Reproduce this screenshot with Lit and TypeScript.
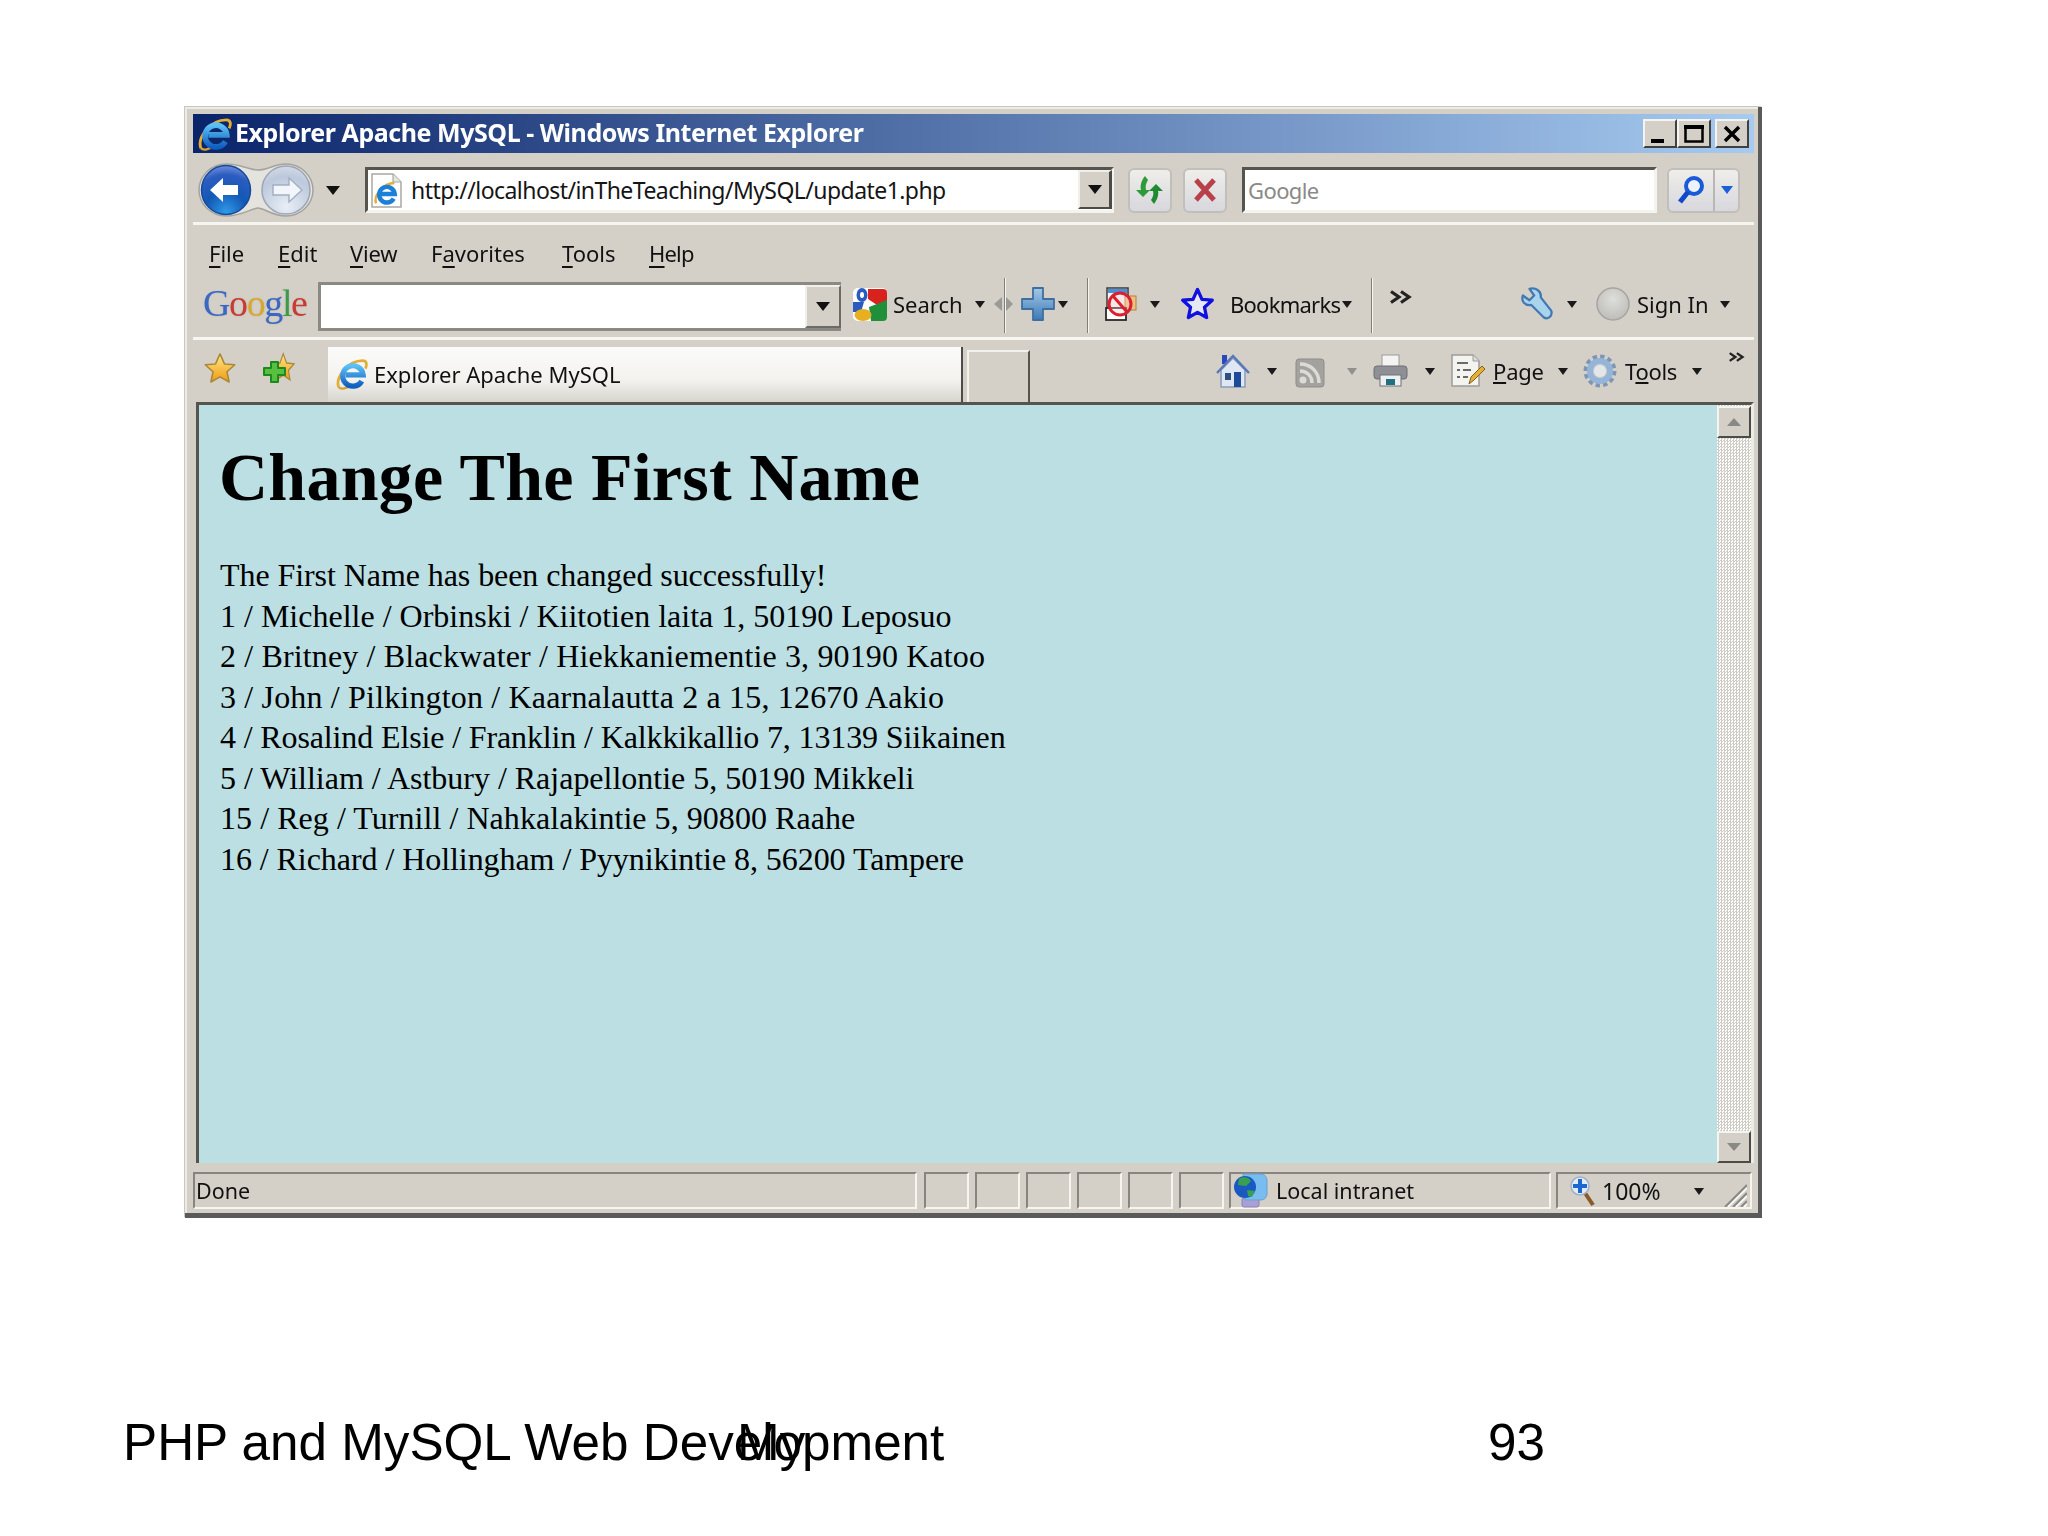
import { LitElement, html, css } from "lit";
import { customElement } from "lit/decorators.js";

const STAR = "17,2 21.6,12.3 32.2,13.1 24.2,20.4 26.4,30.9 17,25.6 7.6,30.9 9.8,20.4 1.8,13.1 12.4,12.3";

const ie = (size: number, id: string) => html`<svg width=${size} height=${size} viewBox="0 0 36 36" class="icon">
  <defs><linearGradient id=${id} x1="0" y1="0" x2="0" y2="1"><stop offset="0" stop-color="#5cc0f4"/><stop offset="1" stop-color="#0f5fc0"/></linearGradient></defs>
  <path d="M3 33C-1 22 13 3 30 3c5 0 5 5 3 9" fill="none" stroke="#e2ae34" stroke-width="3"/>
  <path d="M3 33c3 3 9 1 13-2" fill="none" stroke="#d8a030" stroke-width="2.5"/>
  <path d="M29 26A11.5 11.5 0 1 1 30.5 19H11" fill="none" stroke="url(#${id})" stroke-width="6"/>
</svg>`;

const arrow = (cls = "") => html`<svg class="arrow ${cls}" width="10" height="7" viewBox="0 0 10 7"><path d="M0 0h10L5 7z" fill="#1a1a1a"/></svg>`;
const garrow = html`<svg class="arrow ml22" width="10" height="7" viewBox="0 0 10 7"><path d="M0 0h10L5 7z" fill="#8f8f8c"/></svg>`;
const sep = (cls: string) => html`<i class="vsep ${cls}"></i>`;
const chev = (cls: string, w: number, h: number) => html`<svg class=${cls} width=${w} height=${h} viewBox="0 0 23 14"><path d="M2 1.5l8 5.5-8 5.5M12 1.5l8 5.5-8 5.5" fill="none" stroke="#222" stroke-width="3.2"/></svg>`;

@customElement("app-root")
export class AppRoot extends LitElement {
  static styles = css`
    :host { display: block; width: 2048px; height: 1536px; background: #fff; overflow: hidden; position: relative; font-family: "Noto Sans", sans-serif; }
    .slide { padding: 107px 0 0 185px; }
    svg { display: block; flex: none; }
    .win {
      box-sizing: border-box; width: 1577px; height: 1111px; background: #d4d0c8; padding: 7px 4px 5px 8px;
      border-right: 4px solid #5a5a5a; border-bottom: 5px solid #5a5a5a; box-shadow: inset 2px 2px 0 #ecebe4, -1px -1px 0 #c8c8c0;
      display: flex; flex-direction: column; filter: blur(0.55px); color: #111;
    }
    .title { height: 39px; flex: none; background: linear-gradient(90deg, #0a246a 0%, #a6caf0 100%); display: flex; align-items: center; color: #fff; position: relative; }
    .title .icon { margin-left: 5px; }
    .title b { margin: -3px 0 0 3px; font-size: 25px; font-weight: 700; white-space: nowrap; letter-spacing: -0.45px; }
    .wbtns { margin-left: auto; margin-right: 5px; display: flex; }
    .wb { width: 34px; height: 29px; box-sizing: border-box; background: #d4d0c8; border: 2px solid; border-color: #f4f4f0 #404040 #404040 #f4f4f0; display: flex; align-items: center; justify-content: center; }
    .wb.close { margin-left: 4px; }
    .row { display: flex; flex: none; box-sizing: border-box; }
    .addr { height: 72px; padding-top: 5px; align-items: center; border-bottom: 3px solid; border-image: linear-gradient(#7f7e78 50%, #f6f5f0 50%) 1; }
    .menu { height: 51px; align-items: center; padding: 4px 0 0 16px; font-size: 22px; }
    .menu span { white-space: nowrap; flex: none; }
    .menu u { text-decoration-thickness: 2px; text-underline-offset: 4px; }
    .m-file { width: 34px; } .m-edit { width: 37px; margin-left: 35px; } .m-view { width: 47px; margin-left: 35px; letter-spacing: -0.2px; } .m-fav { width: 96px; margin-left: 34px; } .m-tools { width: 53px; margin-left: 35px; } .m-help { width: 44px; margin-left: 34px; letter-spacing: -0.8px; }
    .gbar { height: 64px; align-items: flex-start; padding-top: 11px; border-bottom: 3px solid; border-image: linear-gradient(#85847e 50%, #f6f5f0 50%) 1; }
    .tabs { height: 62px; align-items: flex-start; padding-top: 14px; }
    .tool { font-size: 22px; white-space: nowrap; line-height: 34px; flex: none; }
    .l-search { width: 70px; } .l-book { width: 108px; letter-spacing: -0.75px; } .l-sign { width: 71px; } .l-page { width: 50px; letter-spacing: -0.2px; } .l-tools { width: 53px; letter-spacing: -0.3px; }
    .arrow { align-self: flex-start; margin-top: 14px; }
    .gripm { margin-top: 10px; }
    .vsep { flex: none; width: 2px; height: 55px; margin-top: -9px; background: linear-gradient(90deg, #7f7e78 50%, #f6f5f0 50%); }
    .chev1 { margin-top: 3px; }
    .chev2 { margin-top: -2px; }
    .up2 { margin-top: -2px; }
    .rss { margin-top: 4px; }
    .ml0 { margin-left: 0; } .ml2 { margin-left: 2px; } .ml3 { margin-left: 3px; } .ml4 { margin-left: 4px; } .ml5 { margin-left: 5px; } .ml7 { margin-left: 7px; }
    .ml8 { margin-left: 8px; } .ml9 { margin-left: 9px; } .ml10 { margin-left: 10px; } .ml11 { margin-left: 11px; } .ml12 { margin-left: 12px; } .ml13 { margin-left: 13px; }
    .ml14 { margin-left: 14px; } .ml15 { margin-left: 15px; } .ml16 { margin-left: 16px; } .ml17 { margin-left: 17px; } .ml18 { margin-left: 18px; } .ml19 { margin-left: 19px; }
    .ml21 { margin-left: 21px; } .ml22 { margin-left: 22px; } .ml25 { margin-left: 25px; } .ml26 { margin-left: 26px; } .ml33 { margin-left: 33px; } .ml108 { margin-left: 108px; } .ml186 { margin-left: 186px; }
    .sunken { box-sizing: border-box; background: #fff; border: 3px solid; border-color: #55544f #f4f4ef #f4f4ef #55544f; display: flex; align-items: center; flex: none; }
    .address { width: 749px; height: 46px; font-size: 23px; }
    .address .url { margin-left: 9px; white-space: nowrap; letter-spacing: -0.56px; flex: 1; color: #151515; }
    .address .icon { margin-left: 3px; }
    .combo { box-sizing: border-box; flex: none; align-self: stretch; width: 34px; background: #d4d0c8; border: 2px solid; border-color: #f0efea #4c4b46 #4c4b46 #f0efea; display: flex; align-items: center; justify-content: center; }
    .address .combo { margin-bottom: 1px; margin-right: -1px; border-right-width: 3px; }
    .searchbox { width: 415px; height: 46px; font-size: 22px; letter-spacing: -0.6px; color: #8a8a88; padding-left: 3px; border-right-color: #f4f4ef; }
    .btn { box-sizing: border-box; flex: none; height: 45px; border: 2px solid #c0bfbc; border-radius: 6px; background: linear-gradient(#efeeea, #d7d7dd); display: flex; align-items: center; justify-content: center; }
    .btn.w44 { width: 44px; }
    .btn.sb { width: 73px; padding: 0; justify-content: flex-start; }
    .sb .a { width: 44px; height: 100%; display: flex; align-items: center; justify-content: center; border-right: 2px solid #b8b7b4; }
    .sb .b { flex: 1; display: flex; align-items: center; justify-content: center; }
    .glogo { width: 104px; font-family: "Liberation Serif", serif; font-size: 38px; line-height: 32px; letter-spacing: -1.4px; white-space: nowrap; flex: none; text-shadow: 0 0 2px rgba(0,0,0,.12); }
    .glogo .b { color: #3a68c4; } .glogo .r { color: #c83a32; } .glogo .y { color: #d8a82c; } .glogo .g { color: #3d9a4a; }
    .ginput { width: 523px; height: 49px; margin-top: -5px; border-color: #8a8984; justify-content: flex-end; border-width: 3px; }
    .ginput .combo { border-width: 2px; width: 36px; margin-right: -3px; border-color: #f0efea #6c6b66 #6c6b66 #f0efea; }
    .tab { flex: none; width: 635px; height: 55px; margin-top: -7px; box-sizing: border-box; padding: 11px 0 0 8px; display: flex; align-items: flex-start; background: linear-gradient(#fbfbf9 0%, #f3f2ef 60%, #d6d4cc 100%); border-right: 2px solid #4c4c4a; font-size: 22px; white-space: nowrap; }
    .tab span { margin-left: 6px; line-height: 32px; }
    .newtab { flex: none; width: 63px; height: 52px; margin-top: -4px; box-sizing: border-box; border: 2px solid #f2f1ec; border-bottom: 0; border-right: 2px solid #55544f; }
    .content { flex: 1; margin-left: 3px; display: flex; background: #bbdfe3; border-top: 3px solid #55544f; border-left: 3px solid #55544f; border-right: 3px solid #ecebe4; min-height: 0; }
    .page { flex: 1; padding: 39px 0 0 21px; font-family: "Liberation Serif", "Times New Roman", serif; color: #000; }
    h1 { margin: 0 0 0 -1px; font-size: 68px; line-height: 66px; font-weight: 700; letter-spacing: 0.26px; white-space: nowrap; }
    .lines { margin-top: 45px; font-size: 32px; line-height: 40.5px; white-space: nowrap; }
    .lines div { height: 40.5px; }
    .l1 { letter-spacing: -0.07px; } .l2 { letter-spacing: 0; } .l3 { letter-spacing: 0.14px; } .l4 { letter-spacing: 0.17px; }
    .l5 { letter-spacing: -0.13px; } .l6 { letter-spacing: -0.01px; } .l7 { letter-spacing: 0.05px; } .l8 { letter-spacing: -0.06px; }
    .scroll { width: 34px; flex: none; display: flex; flex-direction: column; background: repeating-conic-gradient(#cfccc5 0 25%, #fff 0 50%) 0 0 / 3px 3px; }
    .sbtn { box-sizing: border-box; height: 32px; flex: none; background: #d4d0c8; border: 2px solid; border-color: #f4f4f0 #4c4b46 #4c4b46 #f4f4f0; display: flex; align-items: center; justify-content: center; }
    .up { margin-top: 1px; }
    .track { flex: 1; }
    .status { flex: none; height: 36px; margin-top: 9px; display: flex; gap: 6px; font-size: 21.5px; white-space: nowrap; }
    .panel { box-sizing: border-box; height: 37px; border: 2px solid; border-color: #86857f #f6f5f0 #f6f5f0 #86857f; display: flex; align-items: center; flex: none; }
    .p-main { width: 724px; padding-left: 1px; margin-right: 1px; }
    .p45 { width: 45px; }
    .p-zone { width: 322px; padding-left: 2px; margin-left: -1px; }
    .p-zone span { margin-left: 7px; }
    .p-zoom { width: 196px; padding-left: 12px; margin-left: -1px; position: relative; }
    .p-zoom span { margin-left: 6px; width: 60px; font-size: 23px; }
    .p-zoom .arrow { margin: 1px 0 0 32px; align-self: center; }
    .p-zoom .grip { margin-left: 19px; align-self: flex-end; }
    .footer { display: flex; position: relative; margin: 195px 0 0 -185px; padding-left: 123px; font-family: "Liberation Sans", Arial, sans-serif; font-size: 51.2px; line-height: 60px; color: #000; white-space: nowrap; }
    .footer .dev { width: 1365px; flex: none; }
    .overlay { position: absolute; left: 737px; top: 0; }
  `;

  render() {
    return html`<div class="slide">
      <div class="win">
        <div class="title">
          ${ie(34, "ie1")}
          <b>Explorer Apache MySQL - Windows Internet Explorer</b>
          <div class="wbtns">
            <div class="wb"><svg width="24" height="22" viewBox="0 0 24 22"><rect x="3" y="16" width="13" height="4" fill="#000"/></svg></div>
            <div class="wb"><svg width="24" height="22" viewBox="0 0 24 22"><rect x="3.5" y="3.5" width="17" height="15" fill="none" stroke="#000" stroke-width="2.5"/><rect x="2" y="2" width="20" height="4" fill="#000"/></svg></div>
            <div class="wb close"><svg width="22" height="20" viewBox="0 0 22 20"><path d="M4 3l14 14M18 3L4 17" stroke="#000" stroke-width="3.4"/></svg></div>
          </div>
        </div>

        <div class="row addr">
          <svg class="ml5" width="116" height="54" viewBox="0 0 116 54">
            <defs>
              <radialGradient id="bk" cx=".5" cy=".95" r=".95"><stop offset="0" stop-color="#2f9ae8"/><stop offset=".45" stop-color="#1258b4"/><stop offset=".8" stop-color="#2c5cc0"/><stop offset="1" stop-color="#6f8fd8"/></radialGradient>
              <radialGradient id="fw" cx=".5" cy=".85" r=".9"><stop offset="0" stop-color="#e8eef6"/><stop offset=".7" stop-color="#bcc8dc"/><stop offset="1" stop-color="#d8dde8"/></radialGradient>
            </defs>
            <path d="M28 1C44 1 50 7 60 7S76 1 88 1c15 0 27 12 27 26S103 53 88 53c-14 0-22-8-28-8s-16 8-32 8C13 53 1 41 1 27S13 1 28 1z" fill="#e4e3de" stroke="#a4a39e" stroke-width="1.5"/>
            <circle cx="28" cy="27" r="24.5" fill="url(#bk)" stroke="#164a9c" stroke-width="1.5"/>
            <circle cx="88" cy="27" r="24" fill="url(#fw)" stroke="#9ba6b6" stroke-width="1.5"/>
            <path d="M12 27l13-12v7h15v10H25v7z" fill="#fff"/>
            <path d="M104 27L91 15v7H75v10h16v7z" fill="#f2f5fa" stroke="#a2aec0" stroke-width="1.4"/>
          </svg>
          <svg class="ml12" width="14" height="9" viewBox="0 0 14 9"><path d="M0 0h14L7 9z" fill="#111"/></svg>
          <div class="sunken address ml25">
            <svg class="icon" width="31" height="35" viewBox="0 0 31 35">
              <path d="M1 1h21l8 8v25H1z" fill="#fff" stroke="#a8a8a4" stroke-width="1.5"/><path d="M22 1v8h8" fill="#e4e4e0" stroke="#a8a8a4" stroke-width="1.2"/>
              <g transform="translate(3 8) scale(.68)"><path d="M3 33C-1 22 13 3 30 3" fill="none" stroke="#e2ae34" stroke-width="3.5"/><path d="M29 26A11.5 11.5 0 1 1 30.5 19H11" fill="none" stroke="#1c7fd8" stroke-width="6.5"/></g>
            </svg>
            <span class="url">http://localhost/inTheTeaching/MySQL/update1.php</span>
            <div class="combo"><svg width="14" height="9" viewBox="0 0 14 9"><path d="M0 0h14L7 9z" fill="#111"/></svg></div>
          </div>
          <div class="btn w44 ml14"><svg width="30" height="32" viewBox="0 0 30 32"><path d="M10 2c-4 5-5 10-4 14H1l7 7 7-7h-4c-1-3 0-7 2-10z" fill="#2f9a3a"/><path d="M19 30c3-4 5-9 4-13h5l-7-7-7 7h4c1 3 0 6-2 9z" fill="#1f8a32"/></svg></div>
          <div class="btn w44 ml11"><svg width="26" height="26" viewBox="0 0 26 26"><path d="M4 3l18 20M22 3L4 23" stroke="#b8404a" stroke-width="5"/></svg></div>
          <div class="sunken searchbox ml15">Google</div>
          <div class="btn sb ml10">
            <div class="a"><svg width="28" height="30" viewBox="0 0 28 30"><circle cx="17" cy="11" r="8" fill="#eef3fb" stroke="#1a5ad8" stroke-width="4"/><path d="M11 17L3 27" stroke="#0f48c8" stroke-width="5"/></svg></div>
            <div class="b"><svg width="12" height="8" viewBox="0 0 12 8"><path d="M0 0h12L6 8z" fill="#1a60d8"/></svg></div>
          </div>
        </div>

        <div class="row menu">
          <span class="m-file"><u>F</u>ile</span>
          <span class="m-edit"><u>E</u>dit</span>
          <span class="m-view"><u>V</u>iew</span>
          <span class="m-fav">F<u>a</u>vorites</span>
          <span class="m-tools"><u>T</u>ools</span>
          <span class="m-help"><u>H</u>elp</span>
        </div>

        <div class="row gbar">
          <div class="glogo ml10"><span class="b">G</span><span class="r">o</span><span class="y">o</span><span class="b">g</span><span class="g">l</span><span class="r">e</span></div>
          <div class="sunken ginput ml11"><div class="combo"><svg width="14" height="9" viewBox="0 0 14 9"><path d="M0 0h14L7 9z" fill="#111"/></svg></div></div>
          <svg class="ml11" width="36" height="35" viewBox="0 0 36 35">
            <rect x="1" y="1" width="34" height="33" rx="5" fill="#fff"/>
            <path d="M16 2h15a4 4 0 0 1 4 4v8l-10 4-9-6z" fill="#d8221e"/>
            <path d="M35 13v17a4 4 0 0 1-4 4H19l-2-14 8-3z" fill="#1f8f3a"/>
            <ellipse cx="10" cy="8" rx="5.5" ry="7" fill="#2a5cc0"/><ellipse cx="10" cy="8" rx="2" ry="3" fill="#fff"/>
            <path d="M1 15h11l-3 10H1z" fill="#2a5cc0"/>
            <ellipse cx="11" cy="28" rx="8.5" ry="6" fill="#e8b020"/>
          </svg>
          <span class="tool l-search ml5">Search</span>
          ${arrow("ml12")}
          <svg class="ml9 gripm" width="8" height="14" viewBox="0 0 8 14"><path d="M8 0v14L0 7z" fill="#9a9994"/></svg>
          ${sep("ml2")}
          <svg class="gripm" width="7" height="14" viewBox="0 0 7 14"><path d="M0 0v14l7-7z" fill="#9a9994"/></svg>
          <svg class="ml8" width="34" height="34" viewBox="0 0 34 34">
            <defs><linearGradient id="pl" x1="0" y1="0" x2="0" y2="1"><stop offset="0" stop-color="#a4c8e6"/><stop offset="1" stop-color="#3c7ab8"/></linearGradient></defs>
            <path d="M12 1h10v11h11v10H22v11H12V22H1V12h11z" fill="url(#pl)" stroke="#3f6f9f" stroke-width="1.8" stroke-linejoin="round"/>
          </svg>
          ${arrow("ml3")}
          ${sep("ml19")}
          <svg class="ml16" width="33" height="34" viewBox="0 0 33 34">
            <rect x="2" y="1" width="21" height="20" fill="#f4f4f4" stroke="#3a3a3a" stroke-width="1.5"/><rect x="3" y="2" width="19" height="4" fill="#4a90d8"/>
            <rect x="20" y="9" width="11" height="14" fill="#f0c080" stroke="#b08040"/>
            <rect x="1" y="21" width="20" height="12" fill="#fff" stroke="#2a2a2a" stroke-width="1.8"/>
            <circle cx="15" cy="17" r="11" fill="rgba(255,200,200,.35)" stroke="#d82030" stroke-width="3"/><path d="M8 9l14 16" stroke="#d82030" stroke-width="3"/>
          </svg>
          ${arrow("ml12")}
          <svg class="ml21" width="33" height="33" viewBox="0 0 34 33"><polygon points=${STAR} fill="#e6e8f2" stroke="#1010e0" stroke-width="3.4" stroke-linejoin="round"/></svg>
          <span class="tool l-book ml16">Bookmarks</span>
          ${arrow("ml4")}
          ${sep("ml19")}
          ${chev("ml16 chev1", 23, 14)}
          <svg class="ml108" width="34" height="34" viewBox="0 0 36 36"><path d="M3 9l7 5 5-5-5-7c6-2 13 2 12 9l11 14c2 6-4 10-8 7L12 19C5 20 1 15 3 9z" fill="#a8d4ee" stroke="#4478b0" stroke-width="2.4" stroke-linejoin="round"/></svg>
          ${arrow("ml13")}
          <svg class="ml19" width="34" height="34" viewBox="0 0 34 34"><defs><radialGradient id="si" cx=".5" cy=".35" r=".7"><stop offset="0" stop-color="#dededa"/><stop offset="1" stop-color="#bbbab6"/></radialGradient></defs><circle cx="17" cy="17" r="16" fill="url(#si)" stroke="#a5a4a0" stroke-width="1.5"/></svg>
          <span class="tool l-sign ml7">Sign In</span>
          ${arrow("ml12")}
        </div>

        <div class="row tabs">
          <svg class="ml10 up2" width="34" height="32" viewBox="0 0 34 33"><defs><linearGradient id="gs" x1="0" y1="0" x2="0" y2="1"><stop offset="0" stop-color="#ffe88a"/><stop offset="1" stop-color="#f09a10"/></linearGradient></defs><polygon points=${STAR} fill="url(#gs)" stroke="#a88838" stroke-width="1.6" stroke-linejoin="round"/></svg>
          <svg class="ml26 up2" width="32" height="32" viewBox="0 0 32 32">
            <g transform="translate(8 0) scale(.72 .9)"><polygon points=${STAR} fill="url(#gs)" stroke="#a88838" stroke-width="1.6"/></g>
            <path d="M8 10h7v6h7v7h-7v7H8v-7H1v-7h7z" fill="#58c040" stroke="#1c8a1c" stroke-width="2" stroke-linejoin="round"/>
          </svg>
          <div class="tab ml33">${ie(32, "ie2")}<span>Explorer Apache MySQL</span></div>
          <div class="newtab ml4"></div>
          <svg class="ml186" width="34" height="34" viewBox="0 0 34 34">
            <rect x="6" y="1" width="5" height="9" fill="#2a48c0"/>
            <path d="M5 16L17 4l12 12v17H5z" fill="#dfe7f4" stroke="#8a9cb8" stroke-width="1.5"/>
            <path d="M1 19L17 2l16 17" fill="none" stroke="#5a78b8" stroke-width="2.5"/>
            <rect x="18" y="18" width="7" height="15" fill="#1e4a9a"/><rect x="9" y="19" width="6" height="7" fill="#2f4f80"/>
          </svg>
          ${arrow("ml17")}
          <svg class="ml18 rss" width="30" height="30" viewBox="0 0 30 30"><rect x="1" y="1" width="28" height="28" rx="3" fill="#a3a29e" stroke="#8e8d89"/><circle cx="8" cy="22" r="3.5" fill="#dcdbd6"/><path d="M5 13c7 0 12 5 12 12M5 6c11 0 19 8 19 19" fill="none" stroke="#dcdbd6" stroke-width="3.5"/></svg>
          ${garrow}
          <svg class="ml16" width="35" height="33" viewBox="0 0 35 33">
            <rect x="9" y="1" width="17" height="13" fill="#f4f4f2" stroke="#9a9a98"/>
            <rect x="1" y="12" width="33" height="13" rx="3" fill="#8e9096" stroke="#6c6e74"/>
            <rect x="7" y="21" width="21" height="11" fill="#eef0f2" stroke="#6e7078"/><rect x="13" y="25" width="9" height="6" fill="#207080"/>
          </svg>
          ${arrow("ml17")}
          <svg class="ml16" width="34" height="33" viewBox="0 0 34 33">
            <path d="M1 1h21l6 6v25H1z" fill="#f3f3ef" stroke="#9c9c98" stroke-width="1.5"/><path d="M22 1v6h6" fill="#dcdcd8" stroke="#9c9c98"/>
            <path d="M6 9h11M6 16h3M12 16h8M6 23h3M12 23h5" stroke="#6a6a68" stroke-width="2"/>
            <path d="M18 30l2-7 11-11 3 3-11 11z" fill="#e8b030" stroke="#806020"/>
          </svg>
          <span class="tool l-page ml8"><u>P</u>age</span>
          ${arrow("ml15")}
          <svg class="ml15" width="34" height="34" viewBox="0 0 34 34">
            <circle cx="17" cy="17" r="14" fill="none" stroke="#7c96b4" stroke-width="5" stroke-dasharray="4.2 3.1"/>
            <circle cx="17" cy="17" r="10" fill="none" stroke="#94b4d8" stroke-width="6"/>
            <circle cx="17" cy="17" r="6" fill="#e4e6e8"/>
          </svg>
          <span class="tool l-tools ml8">T<u>o</u>ols</span>
          ${arrow("ml14")}
          ${chev("ml26 chev2", 17, 10)}
        </div>

        <div class="content">
          <div class="page">
            <h1>Change The First Name</h1>
            <div class="lines">
              <div class="l1">The First Name has been changed successfully!</div>
              <div class="l2">1 / Michelle / Orbinski / Kiitotien laita 1, 50190 Leposuo</div>
              <div class="l3">2 / Britney / Blackwater / Hiekkaniementie 3, 90190 Katoo</div>
              <div class="l4">3 / John / Pilkington / Kaarnalautta 2 a 15, 12670 Aakio</div>
              <div class="l5">4 / Rosalind Elsie / Franklin / Kalkkikallio 7, 13139 Siikainen</div>
              <div class="l6">5 / William / Astbury / Rajapellontie 5, 50190 Mikkeli</div>
              <div class="l7">15 / Reg / Turnill / Nahkalakintie 5, 90800 Raahe</div>
              <div class="l8">16 / Richard / Hollingham / Pyynikintie 8, 56200 Tampere</div>
            </div>
          </div>
          <div class="scroll">
            <div class="sbtn up"><svg width="14" height="8" viewBox="0 0 14 8"><path d="M0 8h14L7 0z" fill="#8a8984"/></svg></div>
            <div class="track"></div>
            <div class="sbtn"><svg width="14" height="8" viewBox="0 0 14 8"><path d="M0 0h14L7 8z" fill="#8a8984"/></svg></div>
          </div>
        </div>

        <div class="status">
          <div class="panel p-main">Done</div>
          <div class="panel p45"></div><div class="panel p45"></div><div class="panel p45"></div>
          <div class="panel p45"></div><div class="panel p45"></div><div class="panel p45"></div>
          <div class="panel p-zone">
            <svg width="36" height="35" viewBox="0 0 36 35">
              <rect x="9" y="25" width="17" height="9" rx="2" fill="#a8a0d4" stroke="#8880b8"/>
              <path d="M10 1h18a6 6 0 0 1 6 6v14a6 6 0 0 1-6 6H12z" fill="#78bcf0" stroke="#6aa0d0"/>
              <circle cx="12" cy="14" r="11" fill="#1a5ac0"/><path d="M6 6c4-3 10-2 12 2l-5 5-8-1zM14 17l8 1-3 6-4-1z" fill="#38a050"/>
            </svg>
            <span>Local intranet</span>
          </div>
          <div class="panel p-zoom">
            <svg width="26" height="32" viewBox="0 0 26 32"><path d="M15 18l8 12" stroke="#8a5a2a" stroke-width="4"/><circle cx="10" cy="11" r="9" fill="#e0ecf8" stroke="#a0b0c4" stroke-width="1.5"/><path d="M8 4h4v5h5v4h-5v5H8v-5H3V9h5z" fill="#1a68d0"/></svg>
            <span>100%</span>
            <svg class="arrow" width="10" height="7" viewBox="0 0 10 7"><path d="M0 0h10L5 7z" fill="#1a1a1a"/></svg>
            <svg class="grip" width="24" height="24" viewBox="0 0 24 24"><path d="M2 24L24 2M10 24L24 10M18 24l6-6" stroke="#8a8984" stroke-width="2"/><path d="M5 24L24 5M13 24L24 13M21 24l3-3" stroke="#fff" stroke-width="1.5"/></svg>
          </div>
        </div>
      </div>

      <div class="footer">
        <span class="dev">PHP and MySQL Web Development</span>
        <span class="overlay">My</span>
        <span>93</span>
      </div>
    </div>`;
  }
}
